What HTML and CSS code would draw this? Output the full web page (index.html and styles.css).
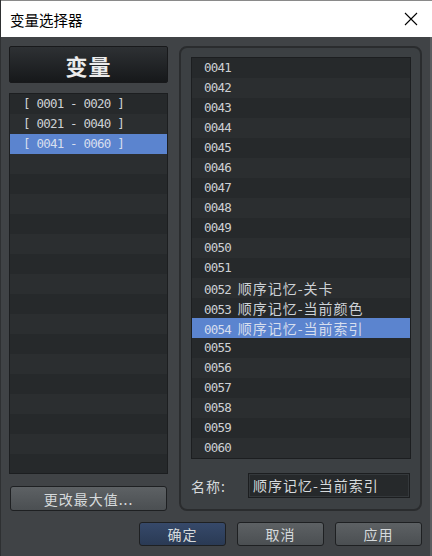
FILE: index.html
```html
<!DOCTYPE html>
<html>
<head>
    <title>变量选择器</title>
    <link rel="stylesheet" href="styles.css">
</head>
<body>
    <div class="window">
        <div class="titlebar">
            <span class="title">变量选择器</span>
            <svg class="close" width="14" height="14" viewBox="0 0 14 14">
                <path d="M1 1 L13 13 M13 1 L1 13" stroke="#000" stroke-width="1.1" fill="none"/>
            </svg>
        </div>

        <div class="main">
            <div class="left">
                <div class="header">变量</div>
                <div class="list groups">
                    <div class="row">[ 0001 - 0020 ]</div>
                    <div class="row">[ 0021 - 0040 ]</div>
                    <div class="row selected">[ 0041 - 0060 ]</div>
                </div>
                <button class="btn">更改最大值...</button>
            </div>

            <div class="panel">
                <div class="list items">
                    <div class="row">0041</div>
                    <div class="row">0042</div>
                    <div class="row">0043</div>
                    <div class="row">0044</div>
                    <div class="row">0045</div>
                    <div class="row">0046</div>
                    <div class="row">0047</div>
                    <div class="row">0048</div>
                    <div class="row">0049</div>
                    <div class="row">0050</div>
                    <div class="row">0051</div>
                    <div class="row">0052 <span class="name">顺序记忆-关卡</span></div>
                    <div class="row">0053 <span class="name">顺序记忆-当前颜色</span></div>
                    <div class="row selected">0054 <span class="name">顺序记忆-当前索引</span></div>
                    <div class="row">0055</div>
                    <div class="row">0056</div>
                    <div class="row">0057</div>
                    <div class="row">0058</div>
                    <div class="row">0059</div>
                    <div class="row">0060</div>
                </div>
                <div class="name-row">
                    <label>名称:</label>
                    <div class="input">顺序记忆-当前索引</div>
                </div>
            </div>
        </div>

        <div class="actions">
            <button class="btn primary">确定</button>
            <button class="btn">取消</button>
            <button class="btn">应用</button>
        </div>
    </div>
</body>
</html>
```

FILE: styles.css
```css
body {
    margin: 0;
    background: #5a5d60;
    font-family: "Noto Sans CJK SC", sans-serif;
}
.window {
    width: 430px;
    height: 556px;
    background: #404346;
    border-left: 1px solid #2e3032;
    box-sizing: border-box;
}
.titlebar {
    height: 37px;
    background: #fff;
    border-top: 1px solid #8a8a8a;
    box-sizing: border-box;
    display: flex;
    align-items: center;
    justify-content: space-between;
    padding: 0 14px 0 9px;
    margin-right: -2px;
}
.title {
    font-size: 14.5px;
    color: #000;
}
.close {
    display: block;
}
.main {
    display: flex;
    gap: 11px;
    padding: 9px 0 0 8px;
}
.left {
    width: 159px;
    display: flex;
    flex-direction: column;
}
.header {
    height: 37px;
    box-sizing: border-box;
    border: 1px solid #18191b;
    border-radius: 2px;
    background: linear-gradient(#2e3134, #16181a);
    color: #ececec;
    font-size: 22px;
    font-weight: bold;
    display: flex;
    align-items: center;
    justify-content: center;
    letter-spacing: 1px;
}
.list {
    border: 1px solid #1c1e20;
    box-sizing: border-box;
    background: repeating-linear-gradient(#26292b 0 20px, #2b2e30 20px 40px);
    font-family: "DejaVu Sans Mono", "Noto Sans CJK SC", monospace;
    font-size: 12.5px;
    letter-spacing: -0.8px;
    color: #cdd1d5;
}
.groups {
    height: 381px;
    margin-top: 10px;
}
.row {
    height: 20px;
    line-height: 20px;
    white-space: nowrap;
}
.groups .row {
    padding-left: 13px;
}
.row.selected {
    background: #5b84cf;
    color: #d6deee;
}
.name {
    font-family: "Noto Sans CJK SC", sans-serif;
    font-size: 14px;
    letter-spacing: 1px;
}
.btn {
    height: 25px;
    box-sizing: border-box;
    border: 1px solid #1e2022;
    border-radius: 3px;
    background: linear-gradient(#5d6164, #4b4f52);
    color: #d6dadc;
    font-family: "Noto Sans CJK SC", sans-serif;
    font-size: 14px;
    letter-spacing: 1px;
    padding: 0;
}
.left .btn {
    margin-top: 12px;
    margin-left: 1px;
    width: 157px;
}
.panel {
    width: 243px;
    height: 465px;
    box-sizing: border-box;
    border: 2px solid #2a2c2e;
    border-radius: 8px;
    background: #3c4043;
    padding: 9px 9px 0 10px;
}
.items {
    height: 402px;
}
.items .row {
    padding-left: 12px;
}
.name-row {
    display: flex;
    align-items: center;
    margin-top: 14px;
    color: #d6dadc;
    font-size: 14px;
    letter-spacing: 1px;
}
.name-row label {
    width: 57px;
}
.input {
    width: 162px;
    height: 25px;
    box-sizing: border-box;
    border: 1px solid #1c1e20;
    box-shadow: inset 0 0 0 1px #34383b;
    background: #26292b;
    line-height: 23px;
    padding-left: 4px;
    font-size: 14px;
    color: #d6dadc;
}
.actions {
    display: flex;
    justify-content: flex-end;
    gap: 11px;
    padding: 11px 8px 0 0;
}
.actions .btn {
    width: 87px;
    height: 24px;
}
.btn.primary {
    background: linear-gradient(#36496a, #2a3a54);
}
```
